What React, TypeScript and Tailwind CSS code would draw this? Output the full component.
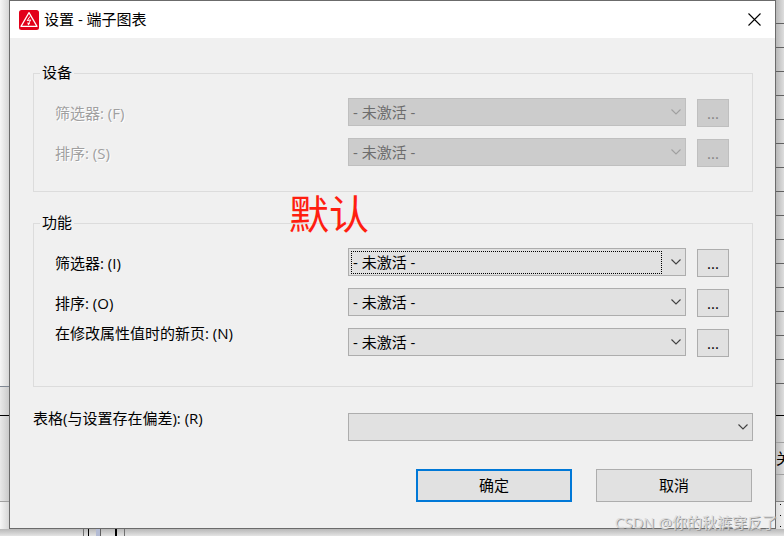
import { useState } from "react";

const INACTIVE = "- 未激活 -";

function Chevron() {
  return (
    <svg
      viewBox="0 0 10 6"
      className="pointer-events-none absolute top-1/2 right-[5px] h-[6px] w-[10px] -translate-y-1/2"
      fill="none"
      stroke="currentColor"
      strokeWidth="1.1"
    >
      <path d="M0.5 0.5 L5 5 L9.5 0.5" />
    </svg>
  );
}

type ComboProps = {
  id: string;
  options: string[];
  disabled?: boolean;
  focused?: boolean;
};

function Combo({ id, options, disabled, focused }: ComboProps) {
  const [value, setValue] = useState(options[0]);

  return (
    <div
      className={`relative h-7 flex-1 ${disabled ? "text-[#a0a0a0]" : "text-[#404040]"}`}
    >
      <select
        id={id}
        value={value}
        disabled={disabled}
        onChange={(e) => setValue(e.target.value)}
        className={`block h-7 w-full appearance-none rounded-none border pl-1 pr-6 outline-none ${
          disabled
            ? "border-[#bfbfbf] bg-[#cccccc] text-[#6d6d6d] opacity-100"
            : "border-[#adadad] bg-[#e1e1e1] text-black"
        }`}
      >
        {options.map((o) => (
          <option key={o}>{o}</option>
        ))}
      </select>
      {focused && (
        <span className="pointer-events-none absolute top-[3px] bottom-[2px] left-[3px] right-6 border border-dotted border-black" />
      )}
      <Chevron />
    </div>
  );
}

type RowProps = {
  id: string;
  label: string;
  disabled?: boolean;
  focused?: boolean;
  labelTop?: boolean;
};

function SettingRow({ id, label, disabled, focused, labelTop }: RowProps) {
  return (
    <div className="flex h-10 items-start">
      <label
        htmlFor={id}
        className={`w-[293px] shrink-0 leading-[18px] ${labelTop ? "" : "pt-[10px]"} ${
          disabled ? "text-[#a0a0a0] [text-shadow:1px_1px_0_#ffffff]" : ""
        }`}
      >
        {label}
      </label>
      <div className="flex flex-1 gap-[11px] pt-1">
        <Combo
          id={id}
          options={[INACTIVE]}
          disabled={disabled}
          focused={focused}
        />
        <button
          type="button"
          disabled={disabled}
          aria-label={`${label} ...`}
          className={`mt-px h-7 w-8 border ${
            disabled
              ? "border-[#bfbfbf] bg-[#cccccc] text-[#838383]"
              : "border-[#adadad] bg-[#e1e1e1]"
          }`}
        >
          ...
        </button>
      </div>
    </div>
  );
}

function TitleBar() {
  return (
    <header className="flex h-[37px] items-center bg-white pl-[9px] pr-[14px]">
      <svg viewBox="0 0 20 20" className="h-5 w-5" fill="none">
        <rect width="20" height="20" rx="2.5" fill="#e2001a" />
        <path
          d="M10 2.6 L18 16.4 H2 Z"
          stroke="#fff"
          strokeWidth="1.2"
          strokeLinejoin="round"
        />
        <path
          d="M11 6.4 L8.2 10.6 L11.6 9.9 L9.8 13.4"
          stroke="#fff"
          strokeWidth="1"
        />
        <path d="M8.2 12.4 L11.2 13.2 L9.2 15.6 Z" fill="#fff" />
      </svg>
      <h1 className="ml-[5px] flex-1 pb-[2px] leading-[18px]">
        设置 - 端子图表
      </h1>
      <button type="button" aria-label="关闭">
        <svg
          viewBox="0 0 13 13"
          className="h-[13px] w-[13px]"
          stroke="#000"
          strokeWidth="1.1"
        >
          <path d="M0.5 0.5 L12.5 12.5 M12.5 0.5 L0.5 12.5" />
        </svg>
      </button>
    </header>
  );
}

// Slivers of the main window that show around the dialog
function LeftEdge() {
  return (
    <div className="flex w-[9px] flex-col bg-linear-to-r from-[#f6f6f6] to-[#d6d6d6]">
      <div className="h-[387px] border-b border-[#7f8793]" />
      <div className="h-[29px] border-b border-black bg-black/5" />
      <div className="h-[86px] border-b border-[#a0a0a0] bg-black/5" />
    </div>
  );
}

function RightEdge() {
  return (
    <div className="flex w-2 flex-col bg-linear-to-r from-[#b8b8b8] to-[#dedede]">
      {Array.from({ length: 16 }, (_, i) => (
        <div key={i} className="h-6 shrink-0 border-b border-[#606060]" />
      ))}
      <div className="h-8 border-b border-black" />
      <div className="h-[27px] border-b border-[#a0a0a0]" />
      <div className="h-8 overflow-hidden border-b border-[#a0a0a0] leading-[30px] whitespace-nowrap">
        关
      </div>
      <div className="h-[27px] border-b border-[#808080]" />
      <div className="flex flex-1 flex-col items-center gap-[10px] bg-white/50 pt-[2px]">
        <span className="h-px w-px bg-black" />
        <span className="h-px w-px bg-black" />
        <span className="h-px w-px bg-black" />
      </div>
    </div>
  );
}

function BottomEdge() {
  return (
    <div className="flex h-[7px] bg-linear-to-b from-[#b8b8b8] to-[#e4e4e4] pl-[83px]">
      <div className="w-px bg-[#707070]" />
      <div className="ml-1 w-px bg-black" />
      <div className="ml-[7px] w-1 bg-[#b4bcd4]" />
      <div className="w-px bg-[#606060]" />
      <div className="ml-[14px] w-[2px] bg-black" />
      <div className="ml-[7px] w-px bg-[#707070]" />
    </div>
  );
}

export default function App() {
  return (
    <div className="relative flex min-h-screen flex-col overflow-hidden bg-[#e4e4e4] font-['Open_Sans','Noto_Sans_CJK_SC',sans-serif] text-[15px] leading-5 text-black">
      <div className="flex">
        <LeftEdge />
        <main className="flex-1 border border-[#6b6b6b] bg-[#f0f0f0]">
          <TitleBar />
          <form
            className="pt-[25px] pr-[22px] pb-[26px] pl-[23px]"
            onSubmit={(e) => e.preventDefault()}
          >
            <fieldset className="border border-[#dcdcdc] pt-[11px] pr-[23px] pb-[17px] pl-[21px]">
              <legend className="-ml-[15px] px-[2px] pb-[2px] leading-[18px]">
                设备
              </legend>
              <SettingRow id="device-filter" label="筛选器: (F)" disabled />
              <SettingRow id="device-sort" label="排序: (S)" disabled />
            </fieldset>

            <fieldset className="mt-[21px] border border-[#dcdcdc] pt-[11px] pr-[23px] pb-[22px] pl-[21px]">
              <legend className="-ml-[15px] px-[2px] pb-[2px] leading-[18px]">
                功能
              </legend>
              <SettingRow id="func-filter" label="筛选器: (I)" focused />
              <SettingRow id="func-sort" label="排序: (O)" />
              <SettingRow
                id="func-page"
                label="在修改属性值时的新页: (N)"
                labelTop
              />
            </fieldset>

            <div className="mt-[22px] flex items-start">
              <label
                htmlFor="form"
                className="w-[315px] shrink-0 leading-[18px]"
              >
                表格(与设置存在偏差): (R)
              </label>
              <div className="flex flex-1 pt-1">
                <Combo id="form" options={[""]} />
              </div>
            </div>

            <div className="mt-7 flex justify-end gap-6 pr-px">
              <button
                type="submit"
                className="h-[33px] w-[156px] border-2 border-[#0078d7] bg-[#e1e1e1] pb-[2px]"
              >
                确定
              </button>
              <button
                type="button"
                className="h-[33px] w-[156px] border border-[#adadad] bg-[#e1e1e1] pb-[2px]"
              >
                取消
              </button>
            </div>
          </form>
        </main>
        <RightEdge />
      </div>
      <BottomEdge />

      <p className="absolute top-[194px] left-[289px] text-[40px] leading-10 text-[#ff1e10]">
        默认
      </p>
      <p className="absolute right-[7px] bottom-1 text-[#dcdcdc] [text-shadow:1px_1px_0_#9a9a9a]">
        CSDN @你的秋裤穿反了
      </p>
    </div>
  );
}
